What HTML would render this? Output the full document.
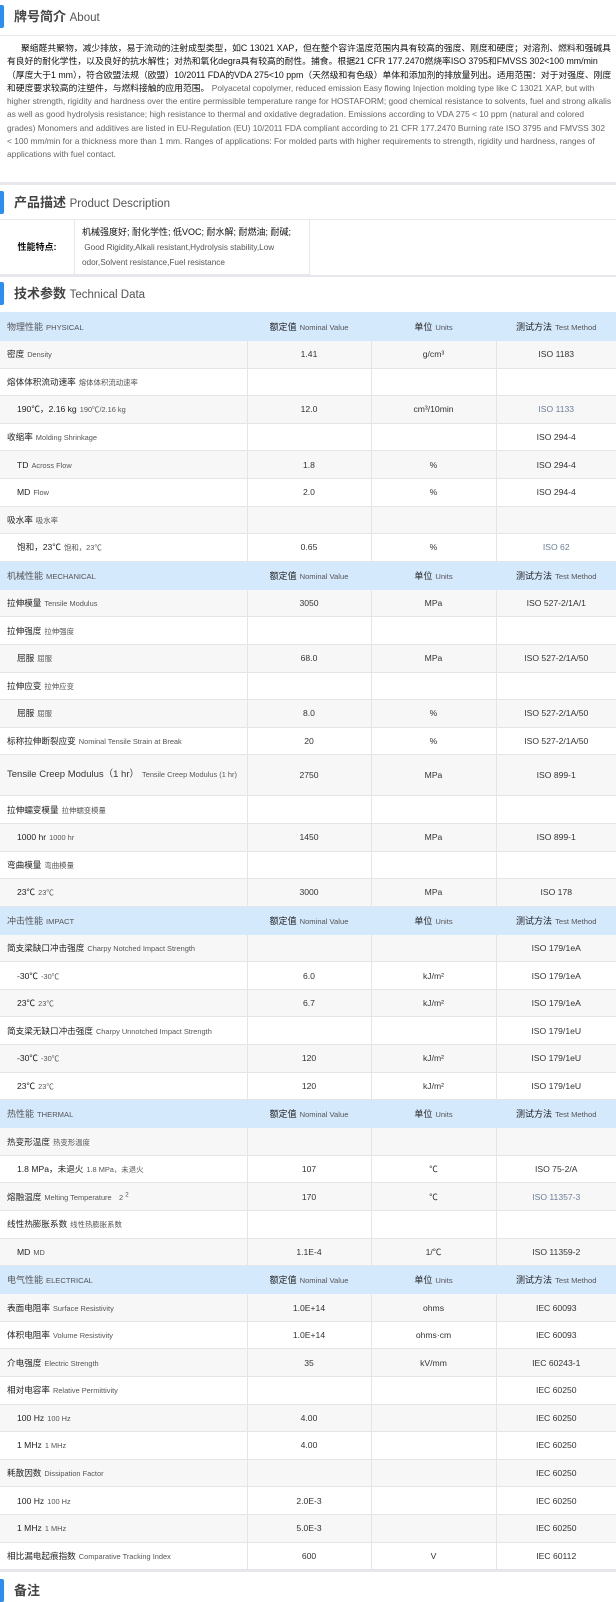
<!DOCTYPE html>
<html><head><meta charset="utf-8"><style>
*{margin:0;padding:0;box-sizing:border-box}
body{width:616px;height:1590px;overflow:hidden;background:#fff;font-family:"Liberation Sans","Noto Sans CJK SC",sans-serif;color:#333;position:relative}
.ttl{position:absolute;left:0;height:23px;width:616px}
.ttl .bar{position:absolute;left:0;top:0;width:4px;height:23px;background:#2b8ef0;border-radius:0 2px 2px 0}
.ttl .t{position:absolute;left:14px;top:2px;font-size:13px;color:#444;font-weight:bold;line-height:19px}
.ttl .t span{font-weight:normal;font-size:11.5px;color:#555}
.hl{position:absolute;left:0;width:616px;background:#e6e8eb}
.para{position:absolute;left:7px;top:42px;width:605px;font-size:8.8px;line-height:13.3px;color:#111;text-indent:14px}
.para span{color:#666;font-size:8.4px}
.feat{position:absolute;top:220px;left:0;width:310px;height:55px;border-right:1px solid #e6e8eb;border-bottom:1px solid #e6e8eb}
.feat .l{position:absolute;left:0;top:0;width:75px;height:55px;border-right:1px solid #e6e8eb;font-size:9px;color:#111;font-weight:bold;text-align:center;line-height:55px}
.feat .r{position:absolute;left:82px;top:5px;width:225px;font-size:9px;line-height:14.5px;color:#111}
.feat .r span{color:#555;font-size:8.2px}
table{position:absolute;left:0;top:312px;width:616px;border-collapse:collapse;table-layout:fixed}
td{border:1px solid #e3e5e9;border-left:none;height:27.6px;font-size:8.6px;color:#333;text-align:center;padding:0;vertical-align:middle}
td:last-child{border-right:none}
td:first-child{text-align:left;padding-left:7px;color:#222}
td small{font-size:7.4px;color:#555;margin-left:3px}
tr.h td{background:#d5e9fd;height:28px;border-color:#d5e9fd;color:#222;font-size:9px}
tr.h td:first-child{color:#555}
tr.h td small{font-size:7.6px;color:#555}
tr.g td{background:#f7f7f7}
td.i{padding-left:17px!important}
.lk{color:#6b7f99}
</style></head><body>
<div class="ttl" style="top:5px"><div class="bar"></div><div class="t">牌号简介 <span>About</span></div></div>
<div class="hl" style="top:35px;height:1px"></div>
<div class="para">聚缩醛共聚物，减少排放，易于流动的注射成型类型，如C 13021 XAP，但在整个容许温度范围内具有较高的强度、刚度和硬度；对溶剂、燃料和强碱具有良好的耐化学性，以及良好的抗水解性；对热和氧化degra具有较高的耐性。捕食。根据21 CFR 177.2470燃烧率ISO 3795和FMVSS 302&lt;100 mm/min（厚度大于1 mm），符合欧盟法规（欧盟）10/2011 FDA的VDA 275&lt;10 ppm（天然级和有色级）单体和添加剂的排放量列出。适用范围：对于对强度、刚度和硬度要求较高的注塑件，与燃料接触的应用范围。 <span>Polyacetal copolymer, reduced emission Easy flowing Injection molding type like C 13021 XAP, but with higher strength, rigidity and hardness over the entire permissible temperature range for HOSTAFORM; good chemical resistance to solvents, fuel and strong alkalis as well as good hydrolysis resistance; high resistance to thermal and oxidative degradation. Emissions according to VDA 275 &lt; 10 ppm (natural and colored grades) Monomers and additives are listed in EU-Regulation (EU) 10/2011 FDA compliant according to 21 CFR 177.2470 Burning rate ISO 3795 and FMVSS 302 &lt; 100 mm/min for a thickness more than 1 mm. Ranges of applications: For molded parts with higher requirements to strength, rigidity und hardness, ranges of applications with fuel contact.</span></div>
<div class="hl" style="top:182px;height:3px"></div>
<div class="ttl" style="top:191px"><div class="bar"></div><div class="t">产品描述 <span>Product Description</span></div></div>
<div class="hl" style="top:219px;height:1px"></div>
<div class="feat"><div class="l">性能特点:</div><div class="r">机械强度好; 耐化学性; 低VOC; 耐水解; 耐燃油; 耐碱;<br><span>&nbsp;Good Rigidity,Alkali resistant,Hydrolysis stability,Low odor,Solvent resistance,Fuel resistance</span></div></div>
<div class="hl" style="top:275px;height:2px"></div>
<div class="ttl" style="top:282px"><div class="bar"></div><div class="t">技术参数 <span>Technical Data</span></div></div>
<table>
<colgroup><col style="width:247px"><col style="width:124px"><col style="width:125px"><col style="width:120px"></colgroup>
<tr class="h"><td>物理性能<small>PHYSICAL</small></td><td>额定值<small>Nominal Value</small></td><td>单位<small>Units</small></td><td>测试方法<small>Test Method</small></td></tr>
<tr class="g"><td>密度<small>Density</small></td><td>1.41</td><td>g/cm³</td><td>ISO 1183</td></tr>
<tr><td>熔体体积流动速率<small>熔体体积流动速率</small></td><td></td><td></td><td></td></tr>
<tr class="g"><td class="i">190℃，2.16 kg<small>190℃/2.16 kg</small></td><td>12.0</td><td>cm³/10min</td><td class="lk">ISO 1133</td></tr>
<tr><td>收缩率<small>Molding Shrinkage</small></td><td></td><td></td><td>ISO 294-4</td></tr>
<tr class="g"><td class="i">TD<small>Across Flow</small></td><td>1.8</td><td>%</td><td>ISO 294-4</td></tr>
<tr><td class="i">MD<small>Flow</small></td><td>2.0</td><td>%</td><td>ISO 294-4</td></tr>
<tr class="g"><td>吸水率<small>吸水率</small></td><td></td><td></td><td></td></tr>
<tr><td class="i">饱和，23℃<small>饱和，23℃</small></td><td>0.65</td><td>%</td><td class="lk">ISO 62</td></tr>
<tr class="h"><td>机械性能<small>MECHANICAL</small></td><td>额定值<small>Nominal Value</small></td><td>单位<small>Units</small></td><td>测试方法<small>Test Method</small></td></tr>
<tr class="g"><td>拉伸模量<small>Tensile Modulus</small></td><td>3050</td><td>MPa</td><td>ISO 527-2/1A/1</td></tr>
<tr><td>拉伸强度<small>拉伸强度</small></td><td></td><td></td><td></td></tr>
<tr class="g"><td class="i">屈服<small>屈服</small></td><td>68.0</td><td>MPa</td><td>ISO 527-2/1A/50</td></tr>
<tr><td>拉伸应变<small>拉伸应变</small></td><td></td><td></td><td></td></tr>
<tr class="g"><td class="i">屈服<small>屈服</small></td><td>8.0</td><td>%</td><td>ISO 527-2/1A/50</td></tr>
<tr><td>标称拉伸断裂应变<small>Nominal Tensile Strain at Break</small></td><td>20</td><td>%</td><td>ISO 527-2/1A/50</td></tr>
<tr class="g"><td style="height:41px;line-height:14px;font-size:9.5px;color:#333;padding-right:6px">Tensile Creep Modulus（1 hr）<small>Tensile Creep Modulus (1 hr)</small></td><td>2750</td><td>MPa</td><td>ISO 899-1</td></tr>
<tr><td>拉伸蠕变模量<small>拉伸蠕变模量</small></td><td></td><td></td><td></td></tr>
<tr class="g"><td class="i">1000 hr<small>1000 hr</small></td><td>1450</td><td>MPa</td><td>ISO 899-1</td></tr>
<tr><td>弯曲模量<small>弯曲模量</small></td><td></td><td></td><td></td></tr>
<tr class="g"><td class="i">23℃<small>23℃</small></td><td>3000</td><td>MPa</td><td>ISO 178</td></tr>
<tr class="h"><td>冲击性能<small>IMPACT</small></td><td>额定值<small>Nominal Value</small></td><td>单位<small>Units</small></td><td>测试方法<small>Test Method</small></td></tr>
<tr class="g"><td>简支梁缺口冲击强度<small>Charpy Notched Impact Strength</small></td><td></td><td></td><td>ISO 179/1eA</td></tr>
<tr><td class="i">-30℃<small>-30℃</small></td><td>6.0</td><td>kJ/m²</td><td>ISO 179/1eA</td></tr>
<tr class="g"><td class="i">23℃<small>23℃</small></td><td>6.7</td><td>kJ/m²</td><td>ISO 179/1eA</td></tr>
<tr><td>简支梁无缺口冲击强度<small>Charpy Unnotched Impact Strength</small></td><td></td><td></td><td>ISO 179/1eU</td></tr>
<tr class="g"><td class="i">-30℃<small>-30℃</small></td><td>120</td><td>kJ/m²</td><td>ISO 179/1eU</td></tr>
<tr><td class="i">23℃<small>23℃</small></td><td>120</td><td>kJ/m²</td><td>ISO 179/1eU</td></tr>
<tr class="h"><td>热性能<small>THERMAL</small></td><td>额定值<small>Nominal Value</small></td><td>单位<small>Units</small></td><td>测试方法<small>Test Method</small></td></tr>
<tr class="g"><td>热变形温度<small>热变形温度</small></td><td></td><td></td><td></td></tr>
<tr><td class="i">1.8 MPa，未退火<small>1.8 MPa，未退火</small></td><td>107</td><td>℃</td><td>ISO 75-2/A</td></tr>
<tr class="g"><td>熔融温度<small>Melting Temperature　2 <sup>2</sup></small></td><td>170</td><td>℃</td><td class="lk">ISO 11357-3</td></tr>
<tr><td>线性热膨胀系数<small>线性热膨胀系数</small></td><td></td><td></td><td></td></tr>
<tr class="g"><td class="i">MD<small>MD</small></td><td>1.1E-4</td><td>1/℃</td><td>ISO 11359-2</td></tr>
<tr class="h"><td>电气性能<small>ELECTRICAL</small></td><td>额定值<small>Nominal Value</small></td><td>单位<small>Units</small></td><td>测试方法<small>Test Method</small></td></tr>
<tr class="g"><td>表面电阻率<small>Surface Resistivity</small></td><td>1.0E+14</td><td>ohms</td><td>IEC 60093</td></tr>
<tr><td>体积电阻率<small>Volume Resistivity</small></td><td>1.0E+14</td><td>ohms·cm</td><td>IEC 60093</td></tr>
<tr class="g"><td>介电强度<small>Electric Strength</small></td><td>35</td><td>kV/mm</td><td>IEC 60243-1</td></tr>
<tr><td>相对电容率<small>Relative Permittivity</small></td><td></td><td></td><td>IEC 60250</td></tr>
<tr class="g"><td class="i">100 Hz<small>100 Hz</small></td><td>4.00</td><td></td><td>IEC 60250</td></tr>
<tr><td class="i">1 MHz<small>1 MHz</small></td><td>4.00</td><td></td><td>IEC 60250</td></tr>
<tr class="g"><td>耗散因数<small>Dissipation Factor</small></td><td></td><td></td><td>IEC 60250</td></tr>
<tr><td class="i">100 Hz<small>100 Hz</small></td><td>2.0E-3</td><td></td><td>IEC 60250</td></tr>
<tr class="g"><td class="i">1 MHz<small>1 MHz</small></td><td>5.0E-3</td><td></td><td>IEC 60250</td></tr>
<tr><td>相比漏电起痕指数<small>Comparative Tracking Index</small></td><td>600</td><td>V</td><td>IEC 60112</td></tr>
</table>
<div class="hl" style="top:1570px;height:2px"></div>
<div class="ttl" style="top:1579px"><div class="bar"></div><div class="t">备注</div></div>
</body></html>
